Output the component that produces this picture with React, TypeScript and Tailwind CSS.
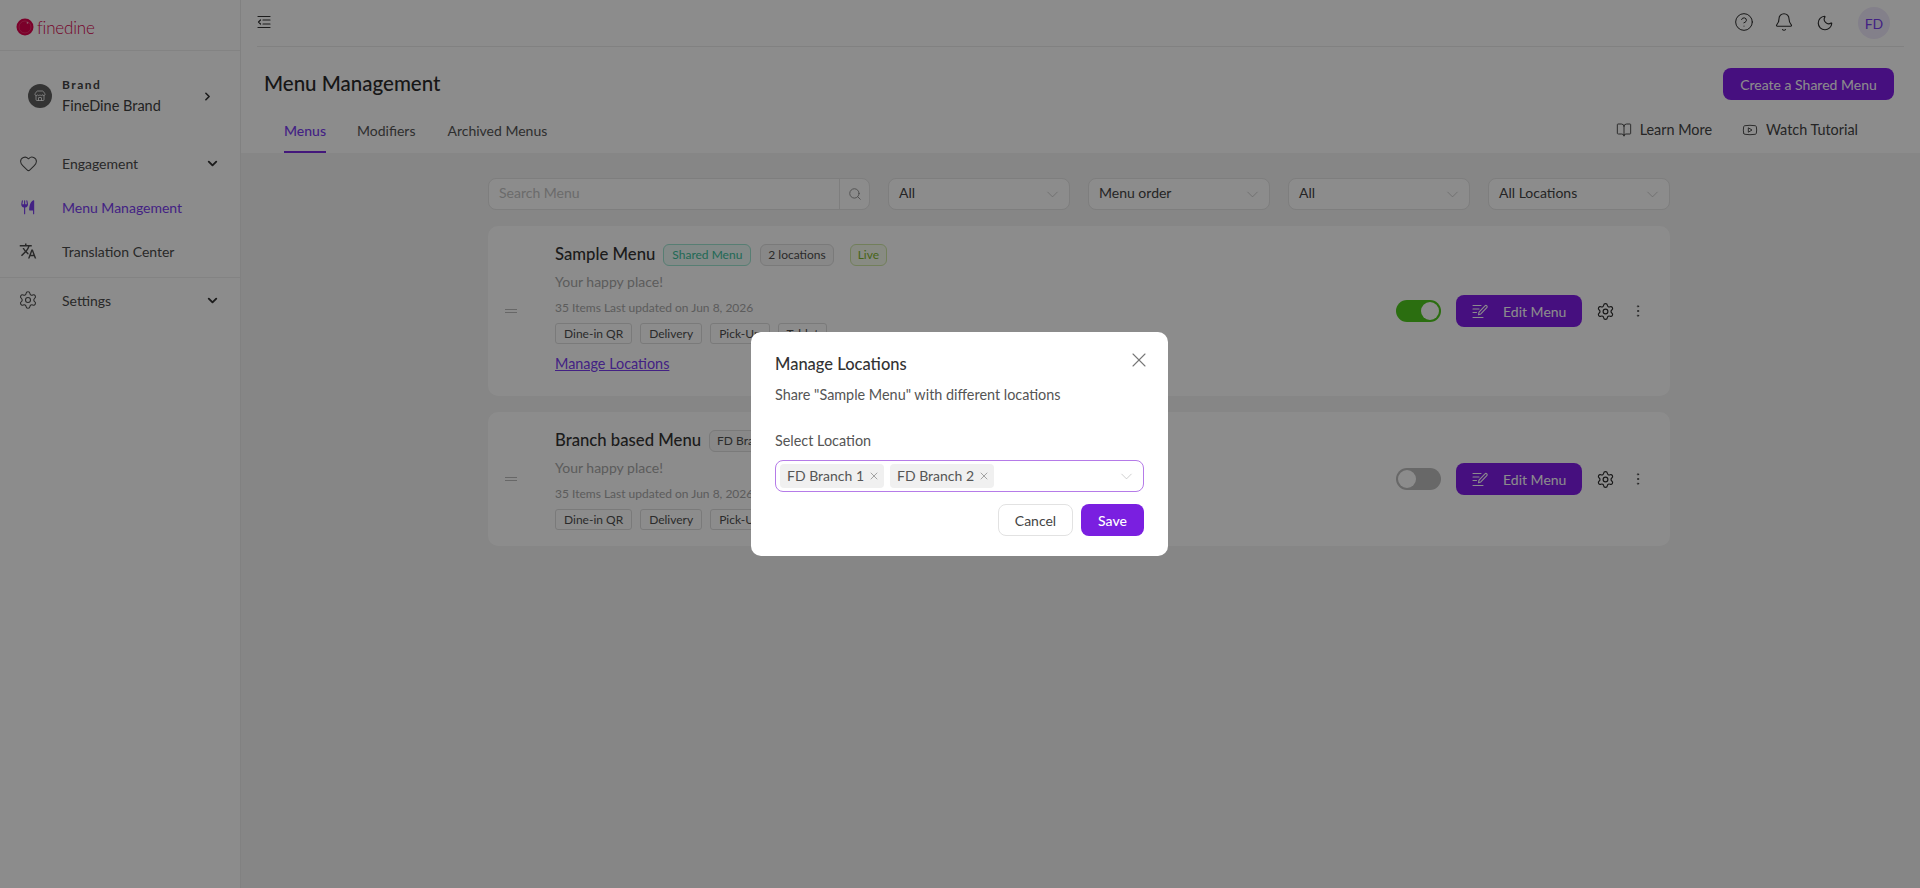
import { Bell, BookOpen, ChevronDown, ChevronRight, CircleHelp, EllipsisVertical, Heart, Moon, Search, Settings, Store, X, Youtube } from "lucide-react";
import { MdTranslate } from "react-icons/md";
import { PiForkKnifeFill } from "react-icons/pi";

const font = { fontFamily: "Lato, 'Noto Sans', sans-serif" };

const EditIcon = () => (
  <svg width="16" height="16" viewBox="0 0 16 16" fill="none" stroke="currentColor" strokeWidth="1.1" strokeLinecap="round" strokeLinejoin="round">
    <path d="M1 2.5h8M1 6h6M1 9.5h3.5M1 14.5h10" />
    <path d="M6.5 11.8l.5-2.6 6-6.4c.5-.5 1.3-.5 1.800 0s.5 1.300 0 1.800l-6 6.300-2.300.9z" />
  </svg>
);

const FoldIcon = () => (
  <svg width="14" height="14" viewBox="0 0 14 14" fill="none" stroke="currentColor" strokeWidth="1.2" strokeLinecap="round" strokeLinejoin="round">
    <path d="M1 1.500h12M6 5h7M6 9h7M1 12.500h12" />
    <path d="M3.500 5L1.500 7l2 2" />
  </svg>
);

const Logo = () => (
  <svg width="18" height="18" viewBox="0 0 18 18">
    <circle cx="9" cy="9" r="8.500" fill="#e0004d" />
    <circle cx="9" cy="9" r="6" fill="none" stroke="#f4517f" strokeWidth="0.6" />
    <circle cx="11.500" cy="4.800" r="0.900" fill="#ffb3c8" />
  </svg>
);

const NavRow = ({ icon, label, active, chevron }: { icon: React.ReactNode; label: string; active?: boolean; chevron?: boolean }) => (
  <div className={`flex h-[44px] items-center pl-[18px] pr-[20px] text-[14px] ${active ? "text-[#7a3df0]" : "text-[#4b4b4b]"}`}>
    <span className="flex w-[20px] shrink-0 items-center justify-center">{icon}</span>
    <span className="ml-[24px] flex-1">{label}</span>
    {chevron && <ChevronDown size={15} strokeWidth={3} className="text-[#333]" />}
  </div>
);

const Sidebar = () => (
  <aside className="flex w-[241px] shrink-0 flex-col border-r border-[#ececec] bg-white">
    <div className="flex h-[51px] items-center gap-[3px] border-b border-[#efefef] pl-[16px] pt-[4px]">
      <Logo />
      <span className="mt-[1px] text-[17px] font-light tracking-[-0.2px] text-[#d6064f]">finedine</span>
    </div>
    <div className="mb-[19px] ml-[16px] mr-[14px] mt-[19px] flex h-[52px] items-center rounded-lg bg-white pl-[12px] pr-[12px]">
      <span className="flex h-[24px] w-[24px] items-center justify-center rounded-full bg-[#606060] text-white">
        <Store size={12} strokeWidth={1.6} />
      </span>
      <div className="ml-[10px] flex-1">
        <div className="text-[12px] font-bold leading-[14px] tracking-[1.5px] text-[#444]">Brand</div>
        <div className="mt-[5px] text-[14.5px] leading-[18px] text-[#404040]">FineDine Brand</div>
      </div>
      <ChevronRight size={13} strokeWidth={3} className="text-[#333]" />
    </div>
    <NavRow icon={<Heart size={19} strokeWidth={1.3} />} label="Engagement" chevron />
    <NavRow icon={<PiForkKnifeFill size={18} />} label="Menu Management" active />
    <NavRow icon={<MdTranslate size={18} />} label="Translation Center" />
    <div className="mt-[4px] border-t border-[#efefef]">
      <NavRow icon={<Settings size={20} strokeWidth={1.3} />} label="Settings" chevron />
    </div>
  </aside>
);

const TopBar = () => (
  <div className="mx-[16px] flex h-[47px] items-center justify-between border-b border-[#ececec] text-[#333]">
    <span className="-mt-[3px] text-[#333]"><FoldIcon /></span>
    <div className="mr-[14px] flex items-center text-[#2d2d2d]">
      <CircleHelp size={20} strokeWidth={1.200} className="-mt-[3px]" />
      <Bell size={20} strokeWidth={1.300} className="ml-[20px] -mt-[3px]" />
      <Moon size={18} strokeWidth={1.500} className="ml-[22px]" />
      <span className="ml-[24px] flex h-[32px] w-[32px] items-center justify-center rounded-full bg-[#efe9fb] text-[14px] text-[#7a3df0]">FD</span>
    </div>
  </div>
);

const PageHeader = () => (
  <div className="bg-white">
    <div className="flex items-start justify-between pl-[23px] pr-[26px] pt-[21px]">
      <h1 className="text-[20.5px] font-medium leading-[30px] text-[#2a2a2a]">Menu Management</h1>
      <button className="h-[32px] w-[171px] rounded-lg bg-[#801ce8] text-[14px] text-white">Create a Shared Menu</button>
    </div>
    <div className="mt-[15px] flex h-[38px] items-start pl-[43px] text-[14px] text-[#555]">
      <div className="flex h-[38px] items-center border-b-2 border-[#7a2be0] pb-[6px] font-medium text-[#7a3df0]">Menus</div>
      <div className="ml-[31px] flex h-[38px] items-center pb-[8px]">Modifiers</div>
      <div className="ml-[32px] flex h-[38px] items-center pb-[8px]">Archived Menus</div>
      <div className="ml-auto mr-[62px] flex h-[38px] items-center pb-[8px] text-[14.4px] text-[#444]">
        <BookOpen size={16} strokeWidth={1.400} />
        <span className="ml-[8px]">Learn More</span>
        <Youtube size={16} strokeWidth={1.400} className="ml-[30px]" />
        <span className="ml-[8px]">Watch Tutorial</span>
      </div>
    </div>
  </div>
);

const FilterSelect = ({ label }: { label: string }) => (
  <div className="flex h-[32px] w-[182px] items-center justify-between rounded-lg border border-[#e5e5e5] bg-white pl-[10px] pr-[7px] text-[14px] text-[#444]">
    <span className="pb-[3px]">{label}</span>
    <ChevronDown size={19} strokeWidth={0.900} className="text-[#bbb]" />
  </div>
);

const Filters = () => (
  <div className="flex gap-[18px]">
    <div className="flex h-[32px] w-[382px] items-center rounded-lg border border-[#e5e5e5] bg-white text-[14px] text-[#c4c4c4]">
      <span className="flex-1 pb-[3px] pl-[10px]">Search Menu</span>
      <span className="flex h-[30px] w-[30px] items-center justify-center border-l border-[#e5e5e5] text-[#888]">
        <Search size={14} strokeWidth={1.500} />
      </span>
    </div>
    <FilterSelect label="All" />
    <FilterSelect label="Menu order" />
    <FilterSelect label="All" />
    <FilterSelect label="All Locations" />
  </div>
);

const Badge = ({ label, className }: { label: string; className: string }) => (
  <span className={`flex h-[22px] items-center rounded-md border text-[12px] ${className}`}>{label}</span>
);

const Tag = ({ label }: { label: string }) => (
  <span className="flex h-[21px] items-center rounded-[3px] border border-[#dedede] px-[8px] text-[12px] text-[#4f4f4f]">{label}</span>
);

const MenuCard = ({ title, badges, live, link, on }: { title: string; badges: React.ReactNode; live?: boolean; link?: boolean; on?: boolean }) => (
  <div className="flex items-center rounded-[10px] bg-white pb-[16px] pl-[17px] pr-[24px] pt-[16px]">
    <span className="flex w-[16px] flex-col gap-[2px]">
      <span className="h-px w-[12px] bg-[#bcbcbc]" />
      <span className="h-px w-[12px] bg-[#bcbcbc]" />
    </span>
    <div className="ml-[34px] flex-1">
      <div className="flex h-[24px] items-center">
        <span className="mt-[1px] text-[16.7px] font-medium text-[#333]">{title}</span>
        <span className="ml-[8px] mt-[2px] flex items-center gap-[9px]">{badges}</span>
        {live && <Badge label="Live" className="ml-[16px] mt-[2px] border-[#cfe8a6] bg-[#f8fdee] px-[7px] text-[#7fb82e]" />}
      </div>
      <div className="mt-[5px] text-[14px] leading-[22px] text-[#a8a8a8]">Your happy place!</div>
      <div className="mt-[6px] text-[12px] leading-[18px] text-[#a8a8a8]">35 Items Last updated on Jun 8, 2026</div>
      <div className="mt-[6px] flex gap-[8px]">
        <Tag label="Dine-in QR" />
        <Tag label="Delivery" />
        <Tag label="Pick-Up" />
        <Tag label="Tablet" />
      </div>
      {link && <div className="mb-[5px] mt-[9px] text-[14.4px] leading-[22px] text-[#7a3df0] underline">Manage Locations</div>}
    </div>
    <span className={`flex h-[22px] w-[45px] items-center rounded-full px-[2px] ${on ? "justify-end bg-[#4fc81e]" : "bg-[#bdbdbd]"}`}>
      <span className="h-[18px] w-[18px] rounded-full bg-white" />
    </span>
    <button className="ml-[15px] flex h-[32px] w-[126px] items-center rounded-lg bg-[#801ce8] pl-[16px] text-[14px] text-white">
      <EditIcon />
      <span className="ml-[15px]">Edit Menu</span>
    </button>
    <Settings size={19} strokeWidth={1.500} className="ml-[14px] text-[#2d2d2d]" />
    <EllipsisVertical size={16} strokeWidth={1.400} className="ml-[15px] text-[#444]" />
  </div>
);

const Chip = ({ label }: { label: string }) => (
  <span className="flex h-[24px] items-center rounded-[4px] bg-[#f0f0f0] pb-[1px] pl-[7px] pr-[4px] text-[14px] text-[#555]">
    {label}
    <X size={12} strokeWidth={1.500} className="ml-[4px] text-[#888]" />
  </span>
);

const ManageLocations = () => (
  <div className="fixed inset-0 flex items-center justify-center bg-black/45 pr-[1px]">
    <div className="w-[417px] rounded-[10px] bg-white px-[24px] pb-[20px] pt-[20px]">
      <div className="flex items-start justify-between">
        <h2 className="mt-[1px] text-[16.5px] font-medium leading-[22px] text-[#333]">Manage Locations</h2>
        <X size={24} strokeWidth={1.100} className="-mr-[7px] -mt-[4px] text-[#777]" />
      </div>
      <p className="mt-[10px] text-[14.4px] leading-[20px] text-[#555]">Share "Sample Menu" with different locations</p>
      <div className="mt-[26px] text-[14.4px] leading-[20px] text-[#555]">Select Location</div>
      <div className="mt-[9px] flex h-[32px] items-center gap-[6px] rounded-lg border-[1.5px] border-[#b57be8] pl-[4px] pr-[7px]">
        <Chip label="FD Branch 1" />
        <Chip label="FD Branch 2" />
        <ChevronDown size={19} strokeWidth={0.900} className="ml-auto text-[#bbb]" />
      </div>
      <div className="mt-[12px] flex justify-end gap-[8px]">
        <button className="h-[32px] w-[75px] rounded-lg border border-[#e2e2e2] bg-white text-[14px] text-[#444]">Cancel</button>
        <button className="h-[32px] w-[63px] rounded-lg bg-[#7a1fe0] text-[14px] font-medium text-white">Save</button>
      </div>
    </div>
  </div>
);

export default function App() {
  return (
    <div className="flex h-[888px] w-[1920px] overflow-hidden bg-[#f4f4f4]" style={font}>
      <Sidebar />
      <main className="flex flex-1 flex-col">
        <div className="bg-white">
          <TopBar />
        </div>
        <PageHeader />
        <div className="ml-[247px] mt-[25px] flex w-[1182px] flex-col">
          <Filters />
          <div className="mt-[16px] flex flex-col gap-[16px]">
            <MenuCard
              title="Sample Menu"
              badges={
                <>
                  <Badge label="Shared Menu" className="border-[#9fe6d2] bg-[#eefbf7] px-[8px] text-[#3cbf9c]" />
                  <Badge label="2 locations" className="border-[#dedede] bg-[#f7f7f7] px-[7px] text-[#4f4f4f]" />
                </>
              }
              live
              link
              on
            />
            <MenuCard title="Branch based Menu" badges={<Badge label="FD Branch 1" className="border-[#dedede] bg-[#f7f7f7] px-[7px] text-[#4f4f4f]" />} />
          </div>
        </div>
      </main>
      <ManageLocations />
    </div>
  );
}
